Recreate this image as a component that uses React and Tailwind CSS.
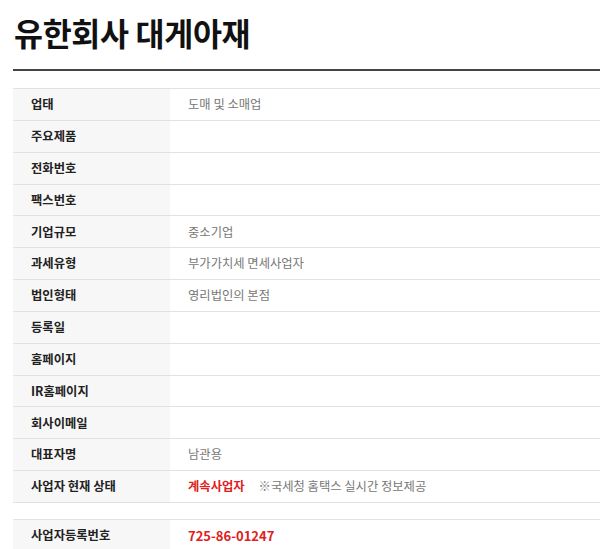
import React from "react";

const rows = [
  ["업태", "도매 및 소매업"],
  ["주요제품", ""],
  ["전화번호", ""],
  ["팩스번호", ""],
  ["기업규모", "중소기업"],
  ["과세유형", "부가가치세 면세사업자"],
  ["법인형태", "영리법인의 본점"],
  ["등록일", ""],
  ["홈페이지", ""],
  ["IR홈페이지", ""],
  ["회사이메일", ""],
  ["대표자명", "남관용"],
];

const font = { fontFamily: '"Noto Sans CJK KR", "Noto Sans", sans-serif' };

function Row({ label, children }) {
  return (
    <div className="flex h-[31.85px] border-b border-[#e2e2e2]">
      <div className="w-[157px] shrink-0 bg-[#f7f7f7] pl-[18px] flex items-center text-[12.3px] font-bold text-[#222]">
        {label}
      </div>
      <div className="flex-1 pl-[18px] flex items-center text-[12.3px] text-[#777]">
        {children}
      </div>
    </div>
  );
}

export default function App() {
  return (
    <div className="w-[600px] h-[549px] overflow-hidden bg-white pl-[13px]" style={font}>
      <div className="pt-[12px] pl-[1px] h-[52px] leading-[40px] text-[31.5px] font-bold text-[#111] tracking-[-0.3px]">
        유한회사 대게아재
      </div>
      <div className="mt-[17px] border-t-2 border-[#444]" />
      <div className="mt-[17px] border-t border-[#e2e2e2]">
        {rows.map(([l, v]) => (
          <Row key={l} label={l}>
            {v}
          </Row>
        ))}
        <Row label="사업자 현재 상태">
          <span className="font-bold text-[#e02020]">계속사업자</span>
          <span className="ml-[14px]">※국세청 홈택스 실시간 정보제공</span>
        </Row>
      </div>
      <div className="mt-[16px] border-t border-[#e2e2e2]">
        <Row label="사업자등록번호">
          <span className="font-bold text-[#e02020] text-[13px]">725-86-01247</span>
        </Row>
      </div>
    </div>
  );
}
